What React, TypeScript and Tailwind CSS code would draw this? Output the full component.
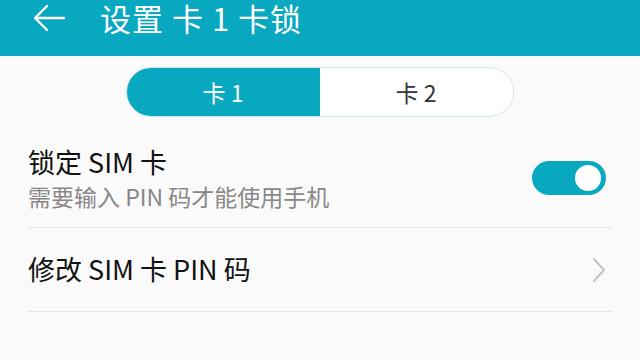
import React from 'react';

const font = { fontFamily: '"Noto Sans CJK SC", "Noto Sans", sans-serif' };

export default function App() {
  return (
    <div className="w-[640px] h-[360px] overflow-hidden bg-[#fafafa]" style={font}>
      {/* Header */}
      <div className="h-[56px] bg-[#08a8c0] flex items-start">
        <div className="flex items-center h-[36px] pl-[32px]">
          <svg width="34" height="30" viewBox="0 0 34 30" fill="none" stroke="white" strokeWidth="2.4" strokeLinecap="round" strokeLinejoin="round">
            <path d="M32 15H3M15 3L3 15l12 12" />
          </svg>
          <span className="ml-[34px] text-white text-[31px] leading-[36px] tracking-[1px]">设置 卡 1 卡锁</span>
        </div>
      </div>

      {/* Segmented control */}
      <div className="flex justify-center pt-[11px]">
        <div className="ml-[-1px] w-[388px] h-[50px] rounded-full border border-[#cfe6ea] flex overflow-hidden">
          <div className="w-1/2 bg-[#08a8c0] text-white flex items-center justify-center text-[23px]">卡 1</div>
          <div className="w-1/2 bg-white text-[#333] flex items-center justify-center text-[23px]">卡 2</div>
        </div>
      </div>

      {/* Lock SIM row */}
      <div className="mx-[28px] mt-[19px] h-[92px] border-b border-[#e4e4e4] flex items-center justify-between">
        <div className="flex flex-col pb-[8px]">
          <span className="text-[27px] leading-[34px] text-[#111]">锁定 SIM 卡</span>
          <span className="text-[23px] leading-[30px] text-[#888] mt-[2px]">需要输入 PIN 码才能使用手机</span>
        </div>
        <div className="w-[74px] h-[34px] rounded-full bg-[#08a8c0] flex items-center justify-end pr-[5px] mr-[6px] mb-[8px]">
          <div className="w-[26px] h-[26px] rounded-full bg-white" />
        </div>
      </div>

      {/* Change PIN row */}
      <div className="mx-[28px] h-[84px] border-b border-[#e4e4e4] flex items-center justify-between">
        <span className="text-[27px] text-[#111]">修改 SIM 卡 PIN 码</span>
        <svg width="14" height="26" viewBox="0 0 14 26" fill="none" stroke="#c4c4c4" strokeWidth="2" strokeLinecap="round" strokeLinejoin="round" className="mr-[6px]">
          <path d="M2 2l10 11L2 24" />
        </svg>
      </div>
    </div>
  );
}
